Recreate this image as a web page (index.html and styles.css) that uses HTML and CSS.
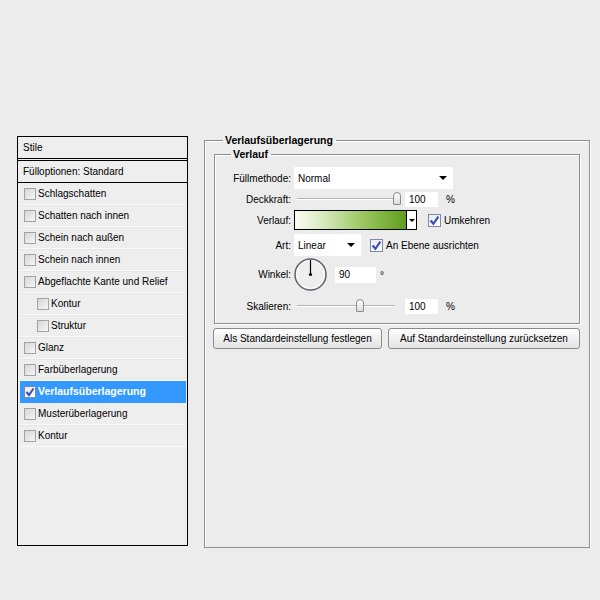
FILE: index.html
```html
<!DOCTYPE html>
<html lang="de">
<head>
    <meta charset="UTF-8">
    <title>Ebenenstil</title>
    <link rel="stylesheet" href="styles.css">
</head>
<body>

<div class="dialog">
    <!-- Stile list -->
    <div class="styles-panel">
        <div class="panel-title">Stile</div>
        <div class="panel-blend">Fülloptionen: Standard</div>
        <ul class="effect-list">
            <li class="effect"><span class="check"></span>Schlagschatten</li>
            <li class="effect"><span class="check"></span>Schatten nach innen</li>
            <li class="effect"><span class="check"></span>Schein nach außen</li>
            <li class="effect"><span class="check"></span>Schein nach innen</li>
            <li class="effect"><span class="check"></span>Abgeflachte Kante und Relief</li>
            <li class="effect sub"><span class="check"></span>Kontur</li>
            <li class="effect sub"><span class="check"></span>Struktur</li>
            <li class="effect"><span class="check"></span>Glanz</li>
            <li class="effect"><span class="check"></span>Farbüberlagerung</li>
            <li class="effect selected">
                <span class="check checked">
                    <svg width="10" height="10" viewBox="0 0 10 10"><path d="M1.5 5 L4 8 L8.5 1.5" fill="none" stroke="#3b4fb0" stroke-width="2"/></svg>
                </span>Verlaufsüberlagerung
            </li>
            <li class="effect"><span class="check"></span>Musterüberlagerung</li>
            <li class="effect"><span class="check"></span>Kontur</li>
        </ul>
    </div>

    <!-- Verlaufsüberlagerung settings -->
    <fieldset class="group outer">
        <legend>Verlaufsüberlagerung</legend>
        <fieldset class="group inner">
            <legend>Verlauf</legend>

            <div class="row row-blend">
                <span class="label">Füllmethode:</span>
                <div class="select select-wide">Normal<span class="arrow"></span></div>
            </div>

            <div class="row row-slider">
                <span class="label">Deckkraft:</span>
                <div class="slider">
                    <div class="track"></div>
                    <div class="thumb" style="left: 99px"></div>
                </div>
                <div class="field field-pct">100</div>
                <span class="unit">%</span>
            </div>

            <div class="row row-gradient">
                <span class="label">Verlauf:</span>
                <div class="gradient-picker">
                    <div class="gradient-swatch"></div>
                    <div class="gradient-arrow"><span class="arrow small"></span></div>
                </div>
                <span class="check checked box">
                    <svg width="11" height="11" viewBox="0 0 10 10"><path d="M1.5 5 L4 8 L8.5 1.5" fill="none" stroke="#3b4fb0" stroke-width="2"/></svg>
                </span>
                <span class="check-label">Umkehren</span>
            </div>

            <div class="row row-style">
                <span class="label">Art:</span>
                <div class="select select-narrow">Linear<span class="arrow"></span></div>
                <span class="check checked box">
                    <svg width="11" height="11" viewBox="0 0 10 10"><path d="M1.5 5 L4 8 L8.5 1.5" fill="none" stroke="#3b4fb0" stroke-width="2"/></svg>
                </span>
                <span class="check-label">An Ebene ausrichten</span>
            </div>

            <div class="row row-angle">
                <span class="label">Winkel:</span>
                <div class="dial">
                    <svg width="33" height="33" viewBox="0 0 33 33">
                        <circle cx="16.5" cy="16.5" r="15.5" fill="#eeeeee" stroke="#5c646e" stroke-width="1.5"/>
                        <circle cx="16.5" cy="16.5" r="14" fill="none" stroke="#ffffff" stroke-width="1"/>
                        <line x1="16.5" y1="16.5" x2="16.5" y2="2" stroke="#000" stroke-width="1.2"/>
                        <circle cx="16.5" cy="16.5" r="1.6" fill="#000"/>
                    </svg>
                </div>
                <div class="field field-angle">90</div>
                <span class="unit degree">°</span>
            </div>

            <div class="row row-slider row-scale">
                <span class="label">Skalieren:</span>
                <div class="slider">
                    <div class="track"></div>
                    <div class="thumb" style="left: 62px"></div>
                </div>
                <div class="field field-pct">100</div>
                <span class="unit">%</span>
            </div>
        </fieldset>

        <div class="buttons">
            <button class="btn btn-save">Als Standardeinstellung festlegen</button>
            <button class="btn btn-reset">Auf Standardeinstellung zurücksetzen</button>
        </div>
    </fieldset>
</div>

</body>
</html>
```

FILE: styles.css
```css
body {
    margin: 0;
    background-color: #ececec;
    font-family: 'Liberation Sans', Arial, sans-serif;
    font-size: 10px;
    line-height: 13px;
    color: #000;
}

.dialog {
    display: flex;
    align-items: flex-start;
    gap: 16px;
    padding: 136px 0 0 17px;
}

/* left list */

.styles-panel {
    box-sizing: border-box;
    width: 171px;
    height: 410px;
    border: 1px solid #000;
    background-color: #eeeeee;
}

.panel-title {
    height: 21px;
    line-height: 21px;
    padding-left: 5px;
    border-bottom: 3px double #000;
}

.panel-blend {
    height: 21px;
    line-height: 21px;
    padding-left: 5px;
    border-bottom: 1px solid #000;
}

.effect-list {
    list-style: none;
    margin: 0;
    padding: 0 1px 0 2px;
}

.effect {
    box-sizing: border-box;
    display: flex;
    align-items: center;
    height: 22px;
    padding-left: 4px;
    border-bottom: 1px solid #fbfbfb;
    box-shadow: 0 1px 0 #e6e6e6 inset;
}

.effect:first-child {
    box-shadow: none;
}

.effect.sub {
    padding-left: 17px;
}

.effect.selected {
    background-color: #3399ff;
    border-bottom-color: #3399ff;
    box-shadow: none;
    color: #fff;
    font-weight: bold;
    font-size: 10.5px;
}

.effect.selected + .effect {
    box-shadow: none;
}

.check {
    box-sizing: border-box;
    display: inline-flex;
    align-items: center;
    justify-content: center;
    flex: none;
    width: 12px;
    height: 12px;
    margin-right: 2px;
    border: 1px solid #a3a3a3;
    background: linear-gradient(135deg, #d6d6d6, #f6f6f6);
}

.check.checked {
    border-color: #7d8aa6;
    background: linear-gradient(135deg, #e6e8ee, #ffffff);
}

.check.box {
    width: 13px;
    height: 13px;
    margin-right: 3px;
}

/* right side groups */

.group {
    margin: 0;
    border: 1px solid #8e8e8e;
    box-shadow: 1px 1px 0 #fff, inset 1px 1px 0 #fff;
}

.group legend {
    font-weight: bold;
    font-size: 10.5px;
    line-height: 14px;
    padding: 0 3px 0 2px;
}

.outer {
    box-sizing: border-box;
    width: 384px;
    height: 415px;
    margin-top: -3px;
    padding: 0 9px;
}

.outer > legend {
    margin-left: 9px;
}

.inner {
    padding: 6px 0 9px 0;
}

.inner > legend {
    margin-left: 16px;
}

.row {
    display: flex;
    align-items: center;
}

.label {
    width: 76px;
    margin-right: 3px;
    text-align: right;
    flex: none;
}

.row-blend {
    height: 22px;
}

.row-slider {
    height: 20px;
}

.row-gradient {
    height: 20px;
    margin-top: 1px;
}

.row-style {
    height: 22px;
    margin-top: 4px;
}

.row-angle {
    height: 33px;
    margin-top: 2px;
}

.row-scale {
    height: 16px;
    margin-top: 7px;
}

.select {
    box-sizing: border-box;
    display: flex;
    align-items: center;
    justify-content: space-between;
    height: 22px;
    padding: 0 6px 0 4px;
    background-color: #fff;
}

.select-wide {
    width: 159px;
}

.select-narrow {
    width: 67px;
    margin-right: 9px;
}

.arrow {
    width: 0;
    height: 0;
    border-left: 4px solid transparent;
    border-right: 4px solid transparent;
    border-top: 4px solid #000;
}

.arrow.small {
    border-left-width: 3px;
    border-right-width: 3px;
    border-top-width: 3px;
}

/* sliders */

.slider {
    position: relative;
    width: 108px;
    height: 14px;
    margin-right: 3px;
}

.track {
    position: absolute;
    left: 3px;
    top: 6px;
    width: 98px;
    height: 1px;
    background-color: #b4b4b4;
    border-bottom: 1px solid #fff;
}

.thumb {
    position: absolute;
    top: 0;
    box-sizing: border-box;
    width: 8px;
    height: 13px;
    border: 1px solid #8c8c8c;
    border-radius: 4px 4px 1px 1px;
    background: linear-gradient(#ffffff, #dcdcdc);
}

.field {
    box-sizing: border-box;
    height: 15px;
    line-height: 15px;
    padding-left: 4px;
    background-color: #fff;
}

.field-pct {
    width: 33px;
    margin-right: 8px;
}

.field-angle {
    width: 41px;
    height: 16px;
    line-height: 16px;
    margin-left: 8px;
    margin-right: 4px;
}

.unit.degree {
    align-self: flex-start;
    margin-top: 11px;
}

/* gradient picker */

.gradient-picker {
    display: flex;
    height: 20px;
    margin-right: 11px;
    border: 1px solid #000;
    box-sizing: border-box;
}

.gradient-swatch {
    width: 111px;
    background: linear-gradient(to right, #fafcf2 0%, #d9eabf 25%, #a6cd6e 55%, #5f9f1c 100%);
    border-right: 1px solid #000;
}

.gradient-arrow {
    display: flex;
    align-items: center;
    justify-content: center;
    width: 9px;
    background-color: #fff;
}

.dial {
    width: 33px;
    height: 33px;
}

.dial svg {
    display: block;
}

/* buttons */

.buttons {
    display: flex;
    gap: 6px;
    margin: 4px 0 0 -1px;
}

.btn {
    height: 21px;
    padding: 0;
    border: 1px solid #8b8b8b;
    border-radius: 3px;
    background: linear-gradient(#fdfdfd, #e3e3e3);
    font-family: 'Liberation Sans', Arial, sans-serif;
    font-size: 10px;
    color: #000;
}

.btn-save {
    width: 169px;
}

.btn-reset {
    width: 192px;
}
```
